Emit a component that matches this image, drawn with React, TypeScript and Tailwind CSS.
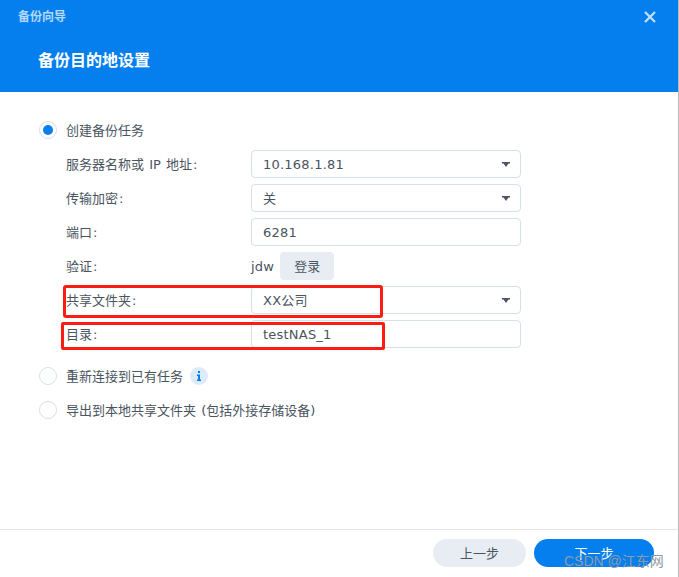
const fontStack = "font-['DejaVu_Sans','Noto_Sans_CJK_SC',sans-serif]";

function Caret() {
  return (
    <svg width="8" height="5" viewBox="0 0 8 5" className="mt-[1px] shrink-0">
      <path d="M0 0h8v1.500H6.500L4 5 1.500 1.500H0z" fill="#4a5563" />
    </svg>
  );
}

function Radio({ checked = false }: { checked?: boolean }) {
  return (
    <span className="flex h-[18px] w-[18px] shrink-0 items-center justify-center rounded-full border border-[#d7e0e8] bg-white">
      {checked && <span className="h-[10px] w-[10px] rounded-full bg-[#057fee]" />}
    </span>
  );
}

function Field({ value, select = false }: { value: string; select?: boolean }) {
  return (
    <div className="flex h-[28px] w-[270px] items-center justify-between rounded-[4px] border border-[#d7e0e8] pl-[11px] pr-[10px]">
      <span className="pt-[2px] tracking-[0.22px]">{value}</span>
      {select && <Caret />}
    </div>
  );
}

function Row({ label, children }: { label: string; children: React.ReactNode }) {
  return (
    <div className="flex h-[28px] items-center pl-[66px]">
      <span className="w-[185px] shrink-0 pt-[2px]">
        {label}
        <span className="ml-[1px]">:</span>
      </span>
      {children}
    </div>
  );
}

export default function App() {
  return (
    <div className={`relative flex h-[577px] w-[679px] flex-col overflow-hidden border-r border-[#b9b9b9] bg-white text-[13px] text-[#4a5460] [word-spacing:1px] ${fontStack}`}>
      {/* Header */}
      <div className="relative h-[92px] shrink-0 bg-[#057fee] pl-[18px] pt-[10px]">
        <div className="text-[12px] leading-[14px] font-bold text-[#b4d9fa]">备份向导</div>
        <div className="mt-[25px] pl-[20px] text-[16px] leading-[24px] font-bold text-white">备份目的地设置</div>
        <svg width="12" height="12" viewBox="0 0 12 12" className="absolute right-[22px] top-[11px]">
          <path d="M1 1l10 10M11 1L1 11" stroke="#c4e0fb" strokeWidth="2.2" />
        </svg>
      </div>

      {/* Form */}
      <div className="flex flex-1 flex-col pt-[24px]">
        <div className="flex h-[28px] items-center gap-[9px] pl-[39px]">
          <Radio checked />
          <span className="pt-[2px]">创建备份任务</span>
        </div>
        <div className="mt-[6px] flex flex-col gap-[6px]">
          <Row label="服务器名称或 IP 地址">
            <Field value="10.168.1.81" select />
          </Row>
          <Row label="传输加密">
            <Field value="关" select />
          </Row>
          <Row label="端口">
            <Field value="6281" />
          </Row>
          <Row label="验证">
            <span className="pt-[2px] tracking-[0.22px]">jdw</span>
            <button className="ml-[6px] h-[28px] w-[54px] rounded-[4px] bg-[#e8edf4] pt-[1px] text-center text-[#4a5460]">登录</button>
          </Row>
          <Row label="共享文件夹">
            <Field value="XX公司" select />
          </Row>
          <Row label="目录">
            <Field value="testNAS_1" />
          </Row>
        </div>
        <div className="mt-[14px] flex h-[28px] items-center gap-[9px] pl-[39px]">
          <Radio />
          <span className="pt-[2px]">重新连接到已有任务</span>
          <span className="-ml-[2px] flex h-[18px] w-[18px] items-center justify-center rounded-full bg-[#dcebfa]">
            <svg width="4" height="10" viewBox="0 0 4 10">
              <path d="M1 0h2v2H1zM0 3.500h3V8.500h1V10H0V8.500h1v-3.500H0z" fill="#057fee" />
            </svg>
          </span>
        </div>
        <div className="mt-[6px] flex h-[28px] items-center gap-[9px] pl-[39px]">
          <Radio />
          <span className="pt-[2px]">导出到本地共享文件夹 (包括外接存储设备)</span>
        </div>
      </div>

      {/* Footer */}
      <div className="flex h-[48px] shrink-0 items-start justify-end gap-[8px] border-t border-[#e3e5e8] pr-[24px] pt-[9px]">
        <button className="h-[28px] w-[93px] rounded-full bg-[#e8edf4] pt-[1px] text-center text-[#4a5460]">上一步</button>
        <button className="h-[28px] w-[120px] rounded-full bg-[#057fee] pt-[1px] text-center text-white">下一步</button>
      </div>

      {/* Screenshot annotations */}
      <div className="absolute left-[63px] top-[285px] h-[33px] w-[320px] rounded-[3px] border-[3px] border-[#fb1d12]" />
      <div className="absolute left-[61px] top-[322px] h-[28px] w-[324px] rounded-[2px] border-[3px] border-[#fb1d12]" />

      {/* Watermark */}
      <div className="absolute left-[564px] top-[552px] font-['Liberation_Sans','Noto_Sans_CJK_SC',sans-serif] text-[14px] leading-[18px] whitespace-nowrap text-[#8e9aa5] [word-spacing:0]">
        CSDN @江东网
      </div>
    </div>
  );
}
